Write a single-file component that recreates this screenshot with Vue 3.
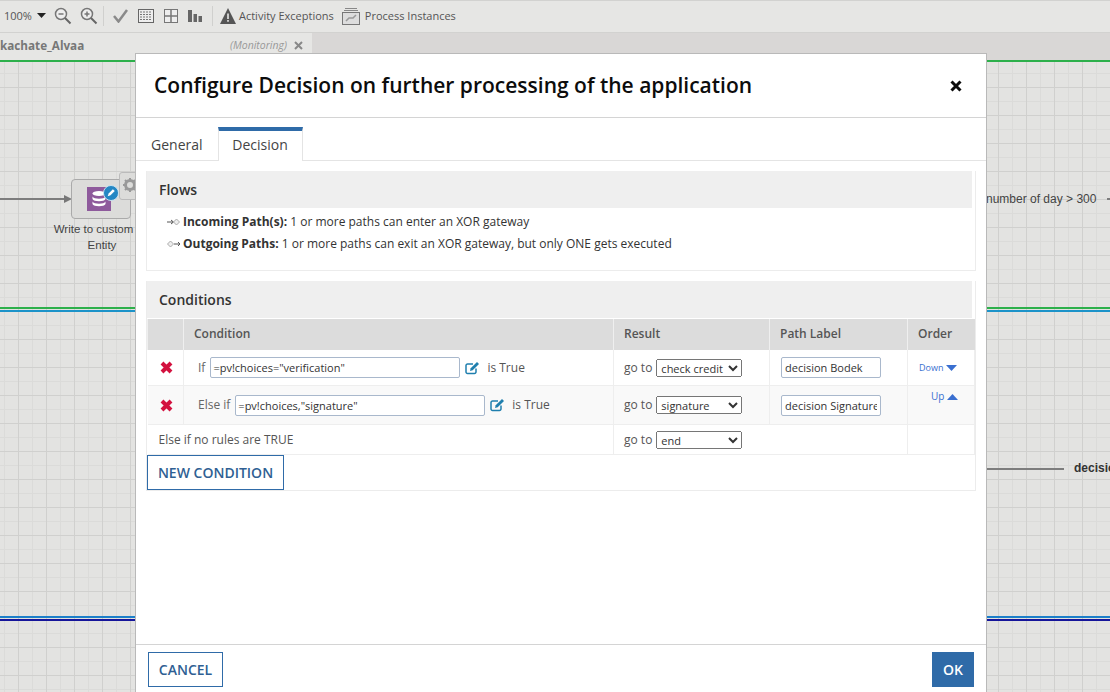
<template>
  <div class="page">
    <div class="toolbar">
      <span class="zoom-val">100%</span>
      <svg class="caret" width="9" height="5" viewBox="0 0 9 5"><path d="M0 0h9L4.500 5z" fill="#222" /></svg>
      <svg class="mag" width="18" height="18" viewBox="0 0 18 18"><circle cx="7" cy="7" r="5.500" fill="#eee" stroke="#777" stroke-width="1.500" /><path d="M4.500 7h5" stroke="#777" stroke-width="1.500" /><path d="M11 11l5.500 5.500" stroke="#666" stroke-width="2" /></svg>
      <svg class="mag" width="18" height="18" viewBox="0 0 18 18"><circle cx="7" cy="7" r="5.500" fill="#eee" stroke="#777" stroke-width="1.500" /><path d="M4.500 7h5M7 4.500v5" stroke="#777" stroke-width="1.500" /><path d="M11 11l5.500 5.500" stroke="#666" stroke-width="2" /></svg>
      <span class="sep sep-a"></span>
      <svg class="tool" width="15" height="14" viewBox="0 0 15 14"><path d="M1 7l4.500 5.500L14 1" fill="none" stroke="#8a8a8a" stroke-width="2.500" /></svg>
      <svg class="tool" width="16" height="14" viewBox="0 0 16 14"><rect x=".5" y=".5" width="15" height="13" fill="#eee" stroke="#666" /><path d="M2 3h12M2 5.500h12M2 8h12M2 10.500h12" stroke="#777" stroke-dasharray="2 1" /></svg>
      <svg class="tool" width="14" height="14" viewBox="0 0 14 14"><rect x=".5" y=".5" width="13" height="13" fill="#eee" stroke="#777" /><path d="M7 0v14M0 7h14" stroke="#777" stroke-width="1.500" /></svg>
      <svg class="tool" width="14" height="12" viewBox="0 0 14 12"><path d="M0 0h4v12H0zM5.500 4h3.500v8H5.500zM10.500 6H14v6h-3.500z" fill="#666" /></svg>
      <span class="sep sep-b"></span>
      <svg class="warn" width="16" height="16" viewBox="0 0 16 16"><path d="M8 0l8 16H0z" fill="#555" /><path d="M7.200 5.500h1.600v5.500H7.200zM7.200 12h1.600v1.700H7.200z" fill="#e8e8e6" /></svg>
      <span>Activity Exceptions</span>
      <svg class="inst" width="18" height="18" viewBox="0 0 18 18"><path d="M3 1.500h12M2 3.500h14" stroke="#888" /><rect x=".5" y="5.500" width="17" height="12" fill="#ddd" stroke="#777" /><path d="M4 14l3-3h4l3-3" fill="none" stroke="#999" stroke-width="1.500" /></svg>
      <span>Process Instances</span>
    </div>

    <div class="tabstrip">
      <div class="doc-tab">
        <span class="doc-name">kachate_Alvaa</span>
        <span class="doc-mode">(Monitoring)</span>
        <svg width="9" height="9" viewBox="0 0 9 9"><path d="M1 1l7 7M8 1L1 8" stroke="#888" stroke-width="2" /></svg>
      </div>
    </div>

    <div class="canvas">
      <div class="lane lane-top"></div>
      <div class="lane lane-mid"></div>
      <div class="lane lane-low"></div>

      <div class="flow-line in-line"></div>
      <svg class="arrow-head" width="8" height="8" viewBox="0 0 8 8"><path d="M0 0l8 4-8 4z" fill="#777" /></svg>
      <div class="node">
        <svg class="node-icon" width="24" height="24" viewBox="0 0 24 24">
          <rect width="24" height="24" fill="#8e5a9c" />
          <ellipse cx="12" cy="6.500" rx="6.500" ry="2.500" fill="#fff" />
          <path d="M5.500 9.500c1 3 12 3 13 0V12c-1 3-12 3-13 0zM5.500 14.500c1 3 12 3 13 0V17c-1 3-12 3-13 0z" fill="#fff" />
        </svg>
        <svg class="edit-badge" width="16" height="16" viewBox="0 0 17 17"><circle cx="8.500" cy="8.500" r="8" fill="#2487c4" stroke="#cfe4f0" /><path d="M5 12l1-3 4.500-4.500 2 2L8 11z" fill="#fff" /></svg>
      </div>
      <div class="gear-box">
        <svg width="14" height="14" viewBox="0 0 14 14"><circle cx="7" cy="7" r="4.500" fill="none" stroke="#999" stroke-width="3" /><path d="M7 0v3M7 11v3M0 7h3M11 7h3M2 2l2 2M10 10l2 2M12 2l-2 2M4 10l-2 2" stroke="#999" stroke-width="2" /></svg>
      </div>
      <div class="node-label"><span class="node-first">Write to custom</span><br />Entity</div>

      <div class="edge-label day-label">number of day &gt; 300</div>
      <div class="flow-line day-line"></div>
      <div class="flow-line decision-line"></div>
      <div class="edge-label decision-label">decision</div>
    </div>

    <div class="modal">
      <div class="modal-head">
        <h1>Configure Decision on further processing of the application</h1>
        <svg width="12" height="12" viewBox="0 0 12 12"><path d="M1.500 1.500l9 9M10.500 1.500l-9 9" stroke="#0b0b0b" stroke-width="3" /></svg>
      </div>

      <div class="tabs">
        <div class="tab">General</div>
        <div class="tab active">Decision</div>
      </div>

      <div class="modal-body">
        <section class="panel flows">
          <h2>Flows</h2>
          <div class="flow-text">
            <p>
              <svg width="13" height="8" viewBox="0 0 13 8"><path d="M0 4h6M4 2l2.500 2L4 6" fill="none" stroke="#555" /><path d="M9.500 1l3 3-3 3-3-3z" fill="#eee" stroke="#aaa" /></svg>
              <b>Incoming Path(s):</b> 1 or more paths can enter an XOR gateway
            </p>
            <p>
              <svg width="13" height="8" viewBox="0 0 13 8"><path d="M3.500 1l3 3-3 3-3-3z" fill="#eee" stroke="#aaa" /><path d="M7 4h6M11 2l2 2-2 2" fill="none" stroke="#555" /></svg>
              <b>Outgoing Paths:</b> 1 or more paths can exit an XOR gateway, but only ONE gets executed
            </p>
          </div>
        </section>

        <section class="panel conditions">
          <h2>Conditions</h2>
          <table>
            <colgroup>
              <col style="width: 36px" />
              <col style="width: 430px" />
              <col style="width: 156px" />
              <col style="width: 138px" />
              <col style="width: 67px" />
            </colgroup>
            <thead>
              <tr>
                <th></th>
                <th>Condition</th>
                <th>Result</th>
                <th>Path Label</th>
                <th>Order</th>
              </tr>
            </thead>
            <tbody>
              <tr v-for="row in rows" :key="row.word" :class="row.cls">
                <td class="del">
                  <svg width="13" height="13" viewBox="0 0 13 13"><path d="M2 2l9 9M11 2l-9 9" stroke="#d3123f" stroke-width="4" /></svg>
                </td>
                <td>
                  <div class="cond">
                    <span class="word">{{ row.word }}</span>
                    <input class="expr" :value="row.expr" />
                    <svg class="pen" width="15" height="14" viewBox="0 0 15 14"><path d="M11 7.500v3.500a1.500 1.500 0 0 1-1.500 1.500H2.500A1.500 1.500 0 0 1 1 11V4.500A1.500 1.500 0 0 1 2.500 3H8" fill="none" stroke="#1f7fae" stroke-width="1.500" /><path d="M5 10l.7-2.800L12 1l2 2-6.300 6.300z" fill="#1f7fae" /></svg>
                    <span>is True</span>
                  </div>
                </td>
                <td>
                  <div class="result">
                    <span>go to</span>
                    <select class="target">
                      <option>{{ row.target }}</option>
                    </select>
                  </div>
                </td>
                <td class="label-cell"><input class="label-input" :value="row.label" /></td>
                <td :class="row.orderCls">
                  {{ row.order }}
                  <svg width="11" height="6" viewBox="0 0 11 6"><path :d="row.arrow" fill="#3a6fd0" /></svg>
                </td>
              </tr>
              <tr class="last">
                <td colspan="2" class="else-cell">Else if no rules are TRUE</td>
                <td colspan="2">
                  <div class="result">
                    <span>go to</span>
                    <select class="target"><option>end</option></select>
                  </div>
                </td>
                <td></td>
              </tr>
            </tbody>
          </table>
          <button class="btn new-btn">NEW CONDITION</button>
        </section>
      </div>

      <div class="modal-foot">
        <button class="btn cancel-btn">CANCEL</button>
        <button class="btn ok-btn">OK</button>
      </div>
    </div>
  </div>
</template>

<script setup>
const rows = [
  {
    word: "If",
    cls: "row-if",
    expr: '=pv!choices="verification"',
    target: "check credit",
    label: "decision Bodek",
    order: "Down",
    orderCls: "order-down",
    arrow: "M0 0h11L5.500 6z",
  },
  {
    word: "Else if",
    cls: "row-else",
    expr: '=pv!choices,"signature"',
    target: "signature",
    label: "decision Signature",
    order: "Up",
    orderCls: "order-up",
    arrow: "M0 6h11L5.500 0z",
  },
]
</script>

<style>
html,
body {
  margin: 0;
  overflow: hidden;
}
</style>

<style scoped>
.page {
  position: relative;
  width: 1110px;
  height: 692px;
  overflow: hidden;
  display: flex;
  flex-direction: column;
  background: #e3e3e1;
  font-family: "Open Sans", sans-serif;
  font-size: 12px;
  color: #333;
}

.toolbar {
  height: 33px;
  flex: none;
  box-sizing: border-box;
  display: flex;
  align-items: center;
  padding: 0 0 2px 4px;
  border-top: 1px solid #d2d2d0;
  border-bottom: 1px solid #d2d2d0;
  background: #e6e6e4;
  color: #555;
  font-size: 11px;
}

.zoom-val {
  margin-right: 5px;
}

.caret {
  margin-right: 8px;
}

.mag {
  margin-right: 8px;
}

.tool {
  margin-right: 10px;
}

.sep {
  width: 1px;
  height: 20px;
  background: #d0d0ce;
}

.sep-a {
  margin: 0 9px 0 -3px;
}

.sep-b {
  margin-right: 7px;
}

.warn {
  margin-right: 3px;
}

.inst {
  margin: 0 5px 0 8px;
}

.tabstrip {
  height: 27px;
  flex: none;
  background: #d9d7d6;
}

.doc-tab {
  width: 312px;
  height: 27px;
  box-sizing: border-box;
  background: #e6e6e4;
  display: flex;
  align-items: center;
  padding: 0 9px 3px 0;
}

.doc-name {
  font-size: 11.700px;
  font-weight: 700;
  color: #777;
  flex: 1;
}

.doc-mode {
  font-size: 10.500px;
  font-style: italic;
  color: #999;
  margin-right: 7px;
}

.canvas {
  position: relative;
  flex: 1;
  background-color: #e3e3e1;
  background-image:
    linear-gradient(#d0d0ce 1px, transparent 1px),
    linear-gradient(90deg, #d0d0ce 1px, transparent 1px),
    linear-gradient(#dbdbd9 1px, transparent 1px),
    linear-gradient(90deg, #dbdbd9 1px, transparent 1px);
  background-size: 28px 28px, 28px 28px, 14px 14px, 14px 14px;
  background-position: 0 27px, 18px 0, 0 13px, 4px 0;
}

.lane {
  position: absolute;
  left: 0;
  right: 0;
}

.lane-top {
  top: 0;
  height: 2px;
  background: #2db04b;
}

.lane-mid {
  top: 247px;
  height: 2px;
  background: #2db04b;
  box-shadow: 0 3px 0 #1c93c9;
}

.lane-low {
  top: 556px;
  height: 2px;
  background: #1c7fc9;
  box-shadow: 0 3px 0 #15159a;
}

.flow-line {
  position: absolute;
  height: 2px;
  background: #7d7d7d;
}

.in-line {
  left: 0;
  width: 66px;
  top: 138px;
}

.arrow-head {
  position: absolute;
  left: 64px;
  top: 135px;
}

.node {
  position: absolute;
  left: 71px;
  top: 119px;
  width: 60px;
  height: 40px;
  box-sizing: border-box;
  border: 1px solid #aaa;
  border-radius: 4px;
  background: #dcdcda;
}

.node-icon {
  position: absolute;
  left: 15px;
  top: 7px;
}

.edit-badge {
  position: absolute;
  left: 31px;
  top: 5px;
}

.gear-box {
  position: absolute;
  left: 119px;
  top: 112px;
  width: 20px;
  height: 28px;
  box-sizing: border-box;
  border: 1px solid #bbb;
  border-radius: 3px;
  background: #dcdcda;
  padding: 5px 0 0 3px;
}

.node-label {
  position: absolute;
  left: 42px;
  top: 161px;
  width: 120px;
  text-align: center;
  font-family: "Liberation Sans", Arial, sans-serif;
  font-size: 11.500px;
  line-height: 16px;
  color: #444;
}

.node-first {
  padding-right: 17px;
}

.edge-label {
  position: absolute;
  font-family: "Liberation Sans", Arial, sans-serif;
  font-size: 12px;
  line-height: 16px;
  white-space: nowrap;
  color: #444;
}

.day-label {
  left: 986px;
  top: 131px;
}

.day-line {
  left: 1107px;
  width: 3px;
  top: 138px;
}

.decision-line {
  left: 986px;
  width: 78px;
  top: 408px;
}

.decision-label {
  left: 1074px;
  top: 400px;
  font-weight: 700;
  color: #333;
}

.modal {
  position: absolute;
  left: 135px;
  top: 53px;
  width: 852px;
  height: 639px;
  box-sizing: border-box;
  border: 1px solid #b9b9b9;
  border-bottom: 0;
  background: #fff;
  display: flex;
  flex-direction: column;
}

.modal-head {
  height: 64px;
  flex: none;
  box-sizing: border-box;
  border-bottom: 1px solid #d4d4d4;
  padding: 0 24px 0 18px;
  display: flex;
  align-items: center;
  justify-content: space-between;
}

h1 {
  margin: 0 0 2px;
  font-size: 21px;
  font-weight: 600;
  color: #0c0c0c;
}

.tabs {
  height: 43px;
  flex: none;
  box-sizing: border-box;
  display: flex;
  align-items: flex-end;
  border-bottom: 1px solid #e4e4e4;
}

.tab {
  height: 34px;
  box-sizing: border-box;
  padding: 8px 15px 0;
  margin-bottom: -1px;
  font-size: 14px;
  color: #444;
}

.tab.active {
  width: 85px;
  border-top: 4px solid #2f6ba8;
  border-left: 1px solid #e4e4e4;
  border-right: 1px solid #e4e4e4;
  background: #fff;
  padding: 4px 0 0;
  text-align: center;
}

.modal-body {
  flex: 1;
  padding: 10px 10px 0;
  display: flex;
  flex-direction: column;
  gap: 10px;
}

.panel {
  box-sizing: border-box;
  width: 830px;
  border: 1px solid #ececec;
  border-top: 0;
}

h2 {
  margin: 0 3px 0 0;
  height: 37px;
  padding-left: 12px;
  background: #efefef;
  font-size: 14px;
  font-weight: 600;
  line-height: 37px;
  color: #333;
}

.flows {
  height: 100px;
}

.flow-text {
  padding: 3px 0 0 20px;
}

.flow-text p {
  margin: 0;
  height: 22px;
  line-height: 22px;
  font-size: 12px;
  color: #333;
}

.flow-text svg {
  margin-right: 3px;
}

.flow-text b {
  font-weight: 700;
}

.conditions {
  height: 210px;
}

table {
  width: 827px;
  margin-top: 1px;
  border-collapse: collapse;
  table-layout: fixed;
  font-size: 12px;
  color: #555;
}

th {
  height: 31px;
  padding: 0 0 2px 10px;
  box-sizing: border-box;
  background: #dcdcdc;
  border-left: 1px solid #efefef;
  text-align: left;
  font-size: 12px;
  font-weight: 600;
  color: #555;
}

td {
  padding: 1px 0 0 10px;
  box-sizing: border-box;
  border: 1px solid #eeeeee;
  border-top: 0;
  white-space: nowrap;
  line-height: 14px;
}

td:first-child {
  border-left: 0;
}

.row-if td {
  height: 35px;
}

.row-else td {
  height: 39px;
  background: #f9f9f9;
}

.last td {
  height: 30px;
}

td.del {
  padding: 4px 0 0 12px;
}

.cond {
  display: flex;
  align-items: center;
  gap: 5px;
  padding-left: 4px;
}

.word {
  color: #666;
}

input {
  box-sizing: border-box;
  height: 21px;
  border: 1px solid #a9b8cc;
  border-radius: 2px;
  padding: 0 2px;
  font-family: "Open Sans", sans-serif;
  font-size: 11px;
  color: #333;
  background: #fff;
}

.expr {
  width: 250px;
}

.pen {
  margin-right: 2px;
}

.result {
  display: flex;
  align-items: center;
  gap: 4px;
}

.target {
  width: 86px;
  height: 18px;
  box-sizing: border-box;
  font-family: "Open Sans", sans-serif;
  font-size: 11px;
  color: #333;
  padding: 0;
}

.label-cell {
  padding-left: 11px;
}

.label-input {
  display: block;
  width: 100px;
  padding: 0 3px;
}

.order-down {
  padding-left: 11px;
  font-size: 9px;
  color: #3a6fd0;
}

.order-up {
  padding: 3px 0 0 23px;
  vertical-align: top;
  font-size: 10px;
  color: #3a6fd0;
}

.else-cell {
  padding-left: 11px;
}

.btn {
  box-sizing: border-box;
  height: 35px;
  border: 1px solid #2f6ba8;
  background: #fff;
  color: #2f5f93;
  font-family: "Open Sans", sans-serif;
  font-size: 14px;
  font-weight: 600;
  padding: 0;
  border-radius: 0;
}

.new-btn {
  width: 137px;
  display: block;
}

.modal-foot {
  height: 48px;
  flex: none;
  box-sizing: border-box;
  border-top: 1px solid #d4d4d4;
  padding: 7px 12px 0;
  display: flex;
  justify-content: space-between;
  align-items: flex-start;
}

.cancel-btn {
  width: 75px;
}

.ok-btn {
  width: 42px;
  background: #2f6ba8;
  color: #fff;
}
</style>
